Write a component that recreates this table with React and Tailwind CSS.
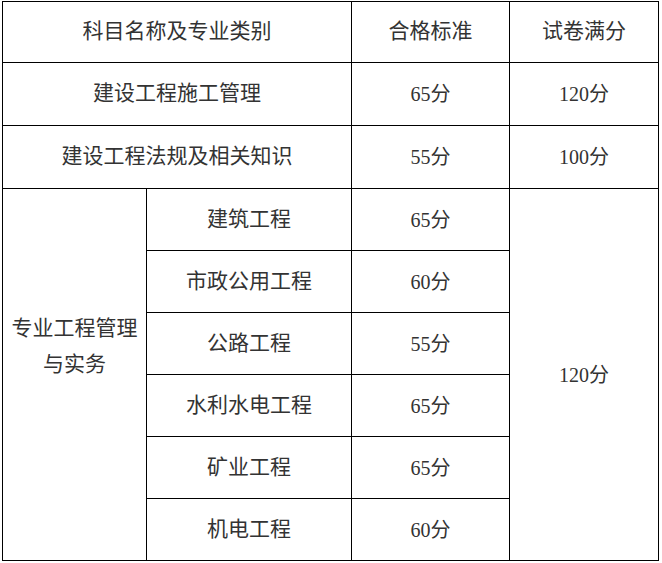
import React from 'react';

const cell = 'border border-black text-center align-middle';
const zh = `${cell} text-[21px]`;

const subRows = [
  ['建筑工程', '65分'],
  ['市政公用工程', '60分'],
  ['公路工程', '55分'],
  ['水利水电工程', '65分'],
  ['矿业工程', '65分'],
  ['机电工程', '60分'],
];

export default function App() {
  return (
    <div className="w-[662px] h-[563px] bg-white pt-px pl-[2px]">
      <table
        className="table-fixed border-collapse text-[20px] text-[#333]"
        style={{ fontFamily: '"Liberation Serif", "Noto Sans CJK SC", serif' }}
      >
        <colgroup>
          <col className="w-[144px]" />
          <col className="w-[205px]" />
          <col className="w-[158px]" />
          <col className="w-[149px]" />
        </colgroup>
        <tbody>
          {/* header */}
          <tr className="h-[61px]">
            <td colSpan={2} className={zh}>科目名称及专业类别</td>
            <td className={zh}>合格标准</td>
            <td className={zh}>试卷满分</td>
          </tr>
          <tr className="h-[63px]">
            <td colSpan={2} className={zh}>建设工程施工管理</td>
            <td className={cell}>65分</td>
            <td className={cell}>120分</td>
          </tr>
          <tr className="h-[63px]">
            <td colSpan={2} className={zh}>建设工程法规及相关知识</td>
            <td className={cell}>55分</td>
            <td className={cell}>100分</td>
          </tr>
          {subRows.map(([name, score], i) => (
            <tr key={name} className="h-[62px]">
              {i === 0 && (
                <td rowSpan={6} className={`${zh} leading-[36px] pb-[58px]`}>
                  专业工程管理
                  <br />
                  与实务
                </td>
              )}
              <td className={zh}>{name}</td>
              <td className={cell}>{score}</td>
              {i === 0 && (
                <td rowSpan={6} className={cell}>120分</td>
              )}
            </tr>
          ))}
        </tbody>
      </table>
    </div>
  );
}
